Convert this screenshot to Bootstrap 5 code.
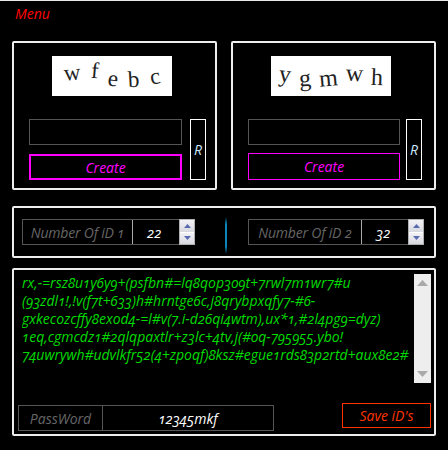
<!doctype html>
<html lang="en"><head><meta charset="utf-8"><title>iD</title>
<link href="https://cdn.jsdelivr.net/npm/bootstrap@5.3.0/dist/css/bootstrap.min.css" rel="stylesheet">
<style>
html,body{height:450px;overflow:hidden;background:#000}
body{font-family:"Open Sans","Liberation Sans",sans-serif;font-style:italic;font-size:14px;font-variant-numeric:oldstyle-nums;border-top:1px solid #e8e8e8;padding:0 12px}
.menu-link{color:#f00;font-size:14px;line-height:18px;padding:4px 3px 0;height:40px}
.panel{border:2px solid #eee;border-radius:2px}
.top-row{display:flex;gap:14px;margin-bottom:16px}
.cap-panel{flex:0 0 205px;height:149px;padding:13px 8px 8px 15px}
.cap-panel+.cap-panel{flex-basis:205px}
.cap-img{width:120px;height:40px;background:#fff;margin:0 0 23px 23px;display:flex;justify-content:center;align-items:center;gap:10px;font-family:"Liberation Serif",serif;font-style:normal;font-size:23px;color:#222}
.cap-img span{display:inline-block}
.cap-panel+.cap-panel .cap-img{margin-left:23px;gap:8px;font-size:24px}
.fake-input{height:26px;border:1px solid #555}
.create{height:26px;margin-top:9px;color:#f0f;border:2px solid #f0f;display:flex;align-items:center;justify-content:center}
.create.thin{height:27px;margin-top:8px;border-width:1px}
.rbtn{flex:0 0 16px;margin-left:8px;border:1px solid #fff;color:#cde6ff;display:flex;align-items:center;justify-content:center;height:61px}
.cap-col{width:153px}
.cap-col.narrow{width:152px}
.rbtn.close-r{margin-left:6px}
.num-panel{height:52px;padding:11px 10px 0 8px;margin-bottom:10px}
.num-group{height:26px;display:flex;border:1px solid #555}
.num-one{width:173px}
.num-two{width:176px}
.num-label{color:#666;display:flex;align-items:center;justify-content:center;letter-spacing:-.2px;white-space:nowrap}
.num-val{border-left:1px solid #aaa;color:#fff;display:flex;align-items:center;justify-content:space-between;flex:0 0 62px;padding-left:14px;background:#000}
.spin{width:16px;height:26px;background:#fff;border:1px solid #b0b0b0;display:flex;flex-direction:column;gap:1px;flex:none;margin-right:-1px}
.spin i{flex:1;background:linear-gradient(#f2f2f6,#d8d8e0);display:flex;align-items:center;justify-content:center}
.divider{width:2px;height:37px;margin:-2px 0 0 8px;background:linear-gradient(transparent,#0a86b8 20%,#0a86b8 80%,transparent)}
.text-panel{height:168px;padding:4px 3px 0 8px;position:relative}
.id-row{display:flex;justify-content:space-between;height:110px}
.id-text{color:#00dc00;font-size:14px;line-height:18px;white-space:pre;overflow:hidden;flex:1}
.sbar{flex:0 0 17px;background:#eee;height:109px;display:flex;flex-direction:column;justify-content:space-between;padding:6px 3px}
.bottom-row{display:flex;justify-content:space-between;align-items:flex-start;margin-top:19px}
.pw-group{display:flex;margin-left:-4px;border:1px solid #555;width:256px;height:26px;margin-top:2px}
.pw-label{flex:0 0 84px;border-right:1px solid #555;color:#666;display:flex;align-items:center;justify-content:center}
.pw-val{flex:1;color:#fff;display:flex;align-items:center;justify-content:center}
.save{width:89px;height:25px;border:1px solid #f30;color:#f30;display:flex;align-items:center;justify-content:center}
.l1{transform:translate(0,-3px) rotate(-5deg)}.l2{transform:translate(0,-5px) rotate(5deg)}.l3{transform:translate(0,3px) rotate(8deg)}.l4{transform:translate(0,4px) rotate(-3deg)}.l5{transform:translate(0,1px) rotate(-10deg)}
.m1{transform:translate(0,-2px) rotate(6deg)}.m2{transform:translate(0,2px) rotate(-4deg)}.m3{transform:translate(0,2px) rotate(-5deg)}.m4{transform:translate(0,-3px) rotate(3deg)}.m5{transform:translate(0,1px) rotate(2deg)}
</style></head>
<body>
<div class="menu-link">Menu</div>
<div class="top-row">
 <div class="panel cap-panel">
  <div class="cap-img"><span class="l1">w</span><span class="l2">f</span><span class="l3">e</span><span class="l4">b</span><span class="l5">c</span></div>
  <div class="d-flex"><div class="cap-col"><div class="fake-input"></div><div class="create">Create</div></div><div class="rbtn">R</div></div>
 </div>
 <div class="panel cap-panel">
  <div class="cap-img"><span class="m1">y</span><span class="m2">g</span><span class="m3">m</span><span class="m4">w</span><span class="m5">h</span></div>
  <div class="d-flex"><div class="cap-col narrow"><div class="fake-input"></div><div class="create thin">Create</div></div><div class="rbtn close-r">R</div></div>
 </div>
</div>
<div class="panel num-panel d-flex justify-content-between">
 <div class="num-group num-one"><div class="num-label flex-grow-1">Number Of iD 1</div><div class="num-val">22<span class="spin"><i><svg width="7" height="4"><path d="M0 4L3.500 0L7 4Z" fill="#5a6ab0"/></svg></i><i><svg width="7" height="4"><path d="M0 0L3.500 4L7 0Z" fill="#5a6ab0"/></svg></i></span></div></div>
 <div class="divider"></div>
 <div class="num-group num-two"><div class="num-label flex-grow-1">Number Of iD 2</div><div class="num-val">32<span class="spin"><i><svg width="7" height="4"><path d="M0 4L3.500 0L7 4Z" fill="#5a6ab0"/></svg></i><i><svg width="7" height="4"><path d="M0 0L3.500 4L7 0Z" fill="#5a6ab0"/></svg></i></span></div></div>
</div>
<div class="panel text-panel">
 <div class="id-row">
  <div class="id-text">rx,-=rsz8u1y6y9+(psfbn#=lq8qop309t+7rwl7m1wr7#u
(93zdl1!,!v(f7t+633)h#hrntge6c,j8qrybpxqfy7-#6-
gxkecozcffy8exod4-=l#v(7.i-d26qi4wtm),ux*1,#2l4pg9=dyz)
1eq,cgmcdz1#2qlqpaxtlr+z3lc+4tv,j(#0q-795955.ybo!
74uwrywh#udvlkfr52(4+zpoqf)8ksz#egue1rds83p2rtd+aux8e2#</div>
  <div class="sbar"><svg width="11" height="6"><path d="M0 6L5.500 0L11 6Z" fill="#aaa"/></svg><svg width="11" height="6"><path d="M0 0L5.500 6L11 0Z" fill="#aaa"/></svg></div>
 </div>
 <div class="bottom-row">
  <div class="pw-group"><div class="pw-label">PassWord</div><div class="pw-val">12345mkf</div></div>
  <div class="save">Save iD's</div>
 </div>
</div>
<script src="https://cdn.jsdelivr.net/npm/bootstrap@5.3.0/dist/js/bootstrap.bundle.min.js"></script>
</body></html>
